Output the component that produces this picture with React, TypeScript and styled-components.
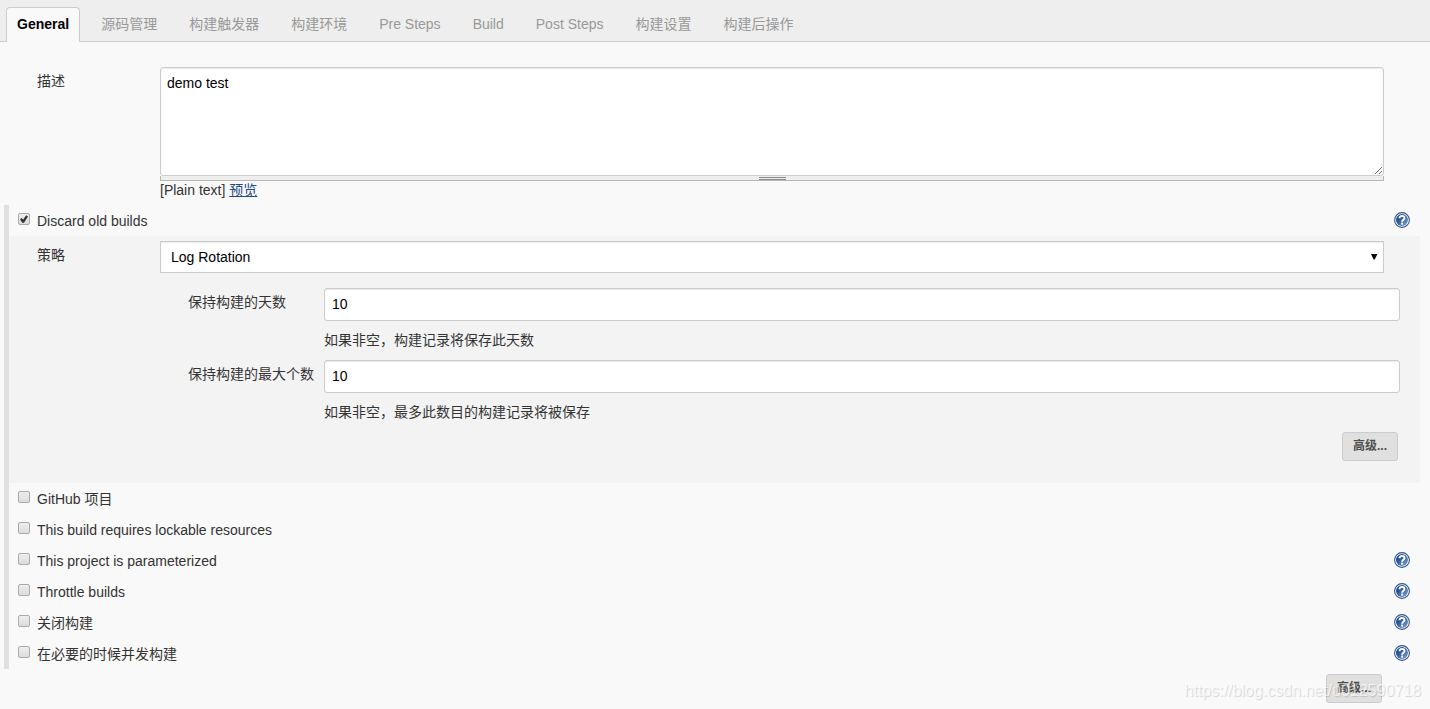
import React from "react";
import styled, { createGlobalStyle } from "styled-components";

const GlobalStyle = createGlobalStyle`
  *, *::before, *::after { box-sizing: border-box; }
  body {
    margin: 0;
    background: #f9f9f9;
    color: #333;
    font: 14px/20px "Liberation Sans", "Noto Sans CJK SC", sans-serif;
  }
  button, input, textarea, select { font: inherit; margin: 0; }
`;

const Page = styled.div`
  position: relative;
  overflow: hidden;
`;

const TabBar = styled.nav`
  display: flex;
  gap: 10px;
  height: 42px;
  padding: 7px 6px 0;
  background: #eee;
  border-bottom: 1px solid #ccc;
`;

const Tab = styled.button<{ $active?: boolean }>`
  height: 35px;
  padding: 0 10px 2px;
  white-space: nowrap;
  border: 1px solid ${(p) => (p.$active ? "#ccc" : "transparent")};
  border-bottom: 0;
  border-radius: 4px 4px 0 0;
  background: ${(p) => (p.$active ? "#f9f9f9" : "transparent")};
  color: ${(p) => (p.$active ? "#000" : "#999")};
  font-weight: ${(p) => (p.$active ? "bold" : "normal")};
`;

const Form = styled.form`
  padding: 25px 10px 6px 4px;
`;

const FieldRow = styled.div`
  display: grid;
  grid-template-columns: 123px minmax(0, 1fr);
  padding: 0 36px 0 33px;
`;

const Label = styled.label`
  padding-top: 4px;
  white-space: nowrap;
`;

const Description = styled.textarea`
  display: block;
  width: 100%;
  height: 109px;
  padding: 5px 6px;
  color: #000;
  background: #fff;
  border: 1px solid #ccc;
  border-radius: 3px;
  box-shadow: inset 0 1px 1px rgba(0, 0, 0, 0.08);
  resize: vertical;
  outline: 0;
`;

const Grip = styled.div`
  display: flex;
  justify-content: center;
  height: 5px;
  padding-top: 1px;
  background: #eee;
  border: 1px solid #b8b8ae;
  border-top: 0;

  &::before {
    content: "";
    width: 27px;
    height: 3px;
    border: 1px solid #888;
    border-width: 1px 0;
  }
`;

const Preview = styled.div`
  height: 24px;
  line-height: 18px;
  a { color: #204a87; }
`;

const Options = styled.section`
  border-left: 5px solid #e0e0e0;
`;

const OptionRow = styled.div`
  display: flex;
  align-items: flex-start;
  height: 31px;
  padding: 6px 10px 0 9px;

  label { flex: 1; padding-left: 7px; }
`;

const Check = styled.input`
  appearance: none;
  display: grid;
  place-items: center;
  width: 12px;
  height: 12px;
  margin-top: 2px;
  border: 1px solid #aaa;
  border-radius: 2px;
  background: linear-gradient(#eee, #dcdcdc);

  &:checked::before {
    content: "";
    width: 8px;
    height: 8px;
    background: #333;
    clip-path: polygon(0% 52%, 22% 38%, 38% 58%, 78% 4%, 100% 20%, 50% 96%, 28% 96%);
  }
`;

const HelpButton = styled.button`
  width: 16px;
  height: 16px;
  margin-top: 1px;
  padding: 0;
  border: 0;
  background: none;
  svg { display: block; }
`;

const Strategy = styled.div`
  height: 247px;
  padding-top: 5px;
  background: #f3f3f3;
  ${FieldRow} { padding-left: 28px; }
`;

const SelectBox = styled.div`
  position: relative;
  svg {
    position: absolute;
    top: 13px;
    right: 6px;
    pointer-events: none;
  }
`;

const Select = styled.select`
  appearance: none;
  display: block;
  width: 100%;
  height: 32px;
  padding: 0 10px;
  color: #000;
  background: #fff;
  border: 1px solid #ccc;
  border-radius: 0;
  box-shadow: inset 0 1px 1px rgba(0, 0, 0, 0.08);
`;

const Rotation = styled.div`
  display: grid;
  grid-template-columns: 136px minmax(0, 1fr);
  padding: 15px 20px 0 179px;
`;

const TextInput = styled.input`
  display: block;
  width: 100%;
  height: 33px;
  padding: 0 7px 2px;
  color: #000;
  background: #fff;
  border: 1px solid #ccc;
  border-radius: 3px;
  box-shadow: inset 0 1px 1px rgba(0, 0, 0, 0.08);
`;

const Hint = styled.div`
  height: 39px;
  padding-top: 9px;
`;

const ButtonRow = styled.div<{ $inset: number }>`
  display: flex;
  justify-content: flex-end;
  padding-right: ${(p) => p.$inset}px;
`;

const AdvancedButton = styled.button`
  width: 56px;
  height: 29px;
  padding: 0 0 2px;
  color: #4d4d4d;
  background: #e0e0e0;
  border: 1px solid #ccc;
  border-radius: 3px;
  font-size: 12px;
  font-weight: bold;
`;

const Footer = styled.div`
  padding-top: 5px;
`;

const Watermark = styled.div`
  position: absolute;
  right: 9px;
  bottom: 8px;
  color: rgba(255, 255, 255, 0.7);
  font-size: 16px;
  text-shadow: 1px 1px 1px rgba(0, 0, 0, 0.15);
  pointer-events: none;
`;

const Help = ({ topic }: { topic: string }) => (
  <HelpButton type="button" aria-label={`Help for feature: ${topic}`}>
    <svg width="16" height="16" viewBox="0 0 16 16">
      <defs>
        <linearGradient id="helpFill" x1="0" y1="0" x2="1" y2="1">
          <stop offset="0.3" stopColor="#234f8d" />
          <stop offset="1" stopColor="#86a9d6" />
        </linearGradient>
      </defs>
      <circle cx="8" cy="8" r="7.4" fill="#fff" stroke="#2d5796" strokeWidth="1.1" />
      <circle cx="8" cy="8" r="6" fill="url(#helpFill)" />
      <path d="M5.5 6.3C5.5 3.1 10.5 3.1 10.5 6C10.5 7.8 8.1 7.7 8.1 9.7" fill="none" stroke="#fff" strokeWidth="1.9" />
      <path d="M7.1 10.6h2v2h-2z" fill="#fff" />
    </svg>
  </HelpButton>
);

interface OptionProps {
  id: string;
  text: string;
  checked?: boolean;
  help?: boolean;
}

const Option = ({ id, text, checked, help }: OptionProps) => (
  <OptionRow>
    <Check type="checkbox" id={id} defaultChecked={checked} />
    <label htmlFor={id}>{text}</label>
    {help && <Help topic={text} />}
  </OptionRow>
);

const tabs = ["General", "源码管理", "构建触发器", "构建环境", "Pre Steps", "Build", "Post Steps", "构建设置", "构建后操作"];

const options: OptionProps[] = [
  { id: "github", text: "GitHub 项目" },
  { id: "lockable", text: "This build requires lockable resources" },
  { id: "parameterized", text: "This project is parameterized", help: true },
  { id: "throttle", text: "Throttle builds", help: true },
  { id: "disable", text: "关闭构建", help: true },
  { id: "concurrent", text: "在必要的时候并发构建", help: true },
];

export default function App() {
  return (
    <Page>
      <GlobalStyle />
      <TabBar>
        {tabs.map((t, i) => (
          <Tab key={t} type="button" $active={i === 0}>{t}</Tab>
        ))}
      </TabBar>
      <Form>
        <FieldRow>
          <Label htmlFor="description">描述</Label>
          <div>
            <Description id="description" defaultValue="demo test" />
            <Grip />
            <Preview>[Plain text] <a href="#preview">预览</a></Preview>
          </div>
        </FieldRow>
        <Options>
          <Option id="discard" text="Discard old builds" checked help />
          <Strategy>
            <FieldRow>
              <Label htmlFor="strategy">策略</Label>
              <SelectBox>
                <Select id="strategy" defaultValue="log">
                  <option value="log">Log Rotation</option>
                </Select>
                <svg width="7" height="6" viewBox="0 0 7 6"><path d="M0 0h6.4L3.7 5.6h-1z" fill="#000" /></svg>
              </SelectBox>
            </FieldRow>
            <Rotation>
              <Label htmlFor="days">保持构建的天数</Label>
              <div>
                <TextInput id="days" defaultValue="10" />
                <Hint>如果非空，构建记录将保存此天数</Hint>
              </div>
              <Label htmlFor="count">保持构建的最大个数</Label>
              <div>
                <TextInput id="count" defaultValue="10" />
                <Hint>如果非空，最多此数目的构建记录将被保存</Hint>
              </div>
            </Rotation>
            <ButtonRow $inset={22}>
              <AdvancedButton type="button">高级...</AdvancedButton>
            </ButtonRow>
          </Strategy>
          {options.map((o) => <Option key={o.id} {...o} />)}
        </Options>
        <Footer>
          <ButtonRow $inset={38}>
            <AdvancedButton type="button">高级...</AdvancedButton>
          </ButtonRow>
        </Footer>
      </Form>
      <Watermark>https://blog.csdn.net/u012590718</Watermark>
    </Page>
  );
}
